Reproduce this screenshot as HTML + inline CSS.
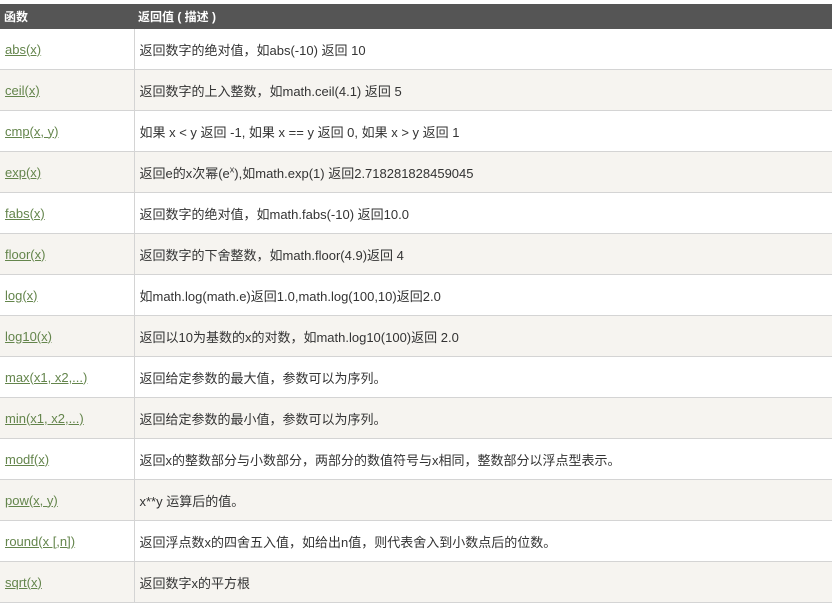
<!DOCTYPE html><html><head><meta charset="utf-8"><style>
body{margin:0;background:#fff;font-family:"Liberation Sans","Noto Sans CJK SC",sans-serif;font-size:13px;color:#333;overflow:hidden}
table{position:absolute;top:4px;left:0;width:832px;border-collapse:collapse;table-layout:fixed}
th{background:#555;color:#fff;text-align:left;font-weight:bold;height:25px;padding:0 0 0 4px;font-size:12px}
td{height:40px;padding:0 0 0 5px;border-bottom:1px solid #d4d4d4;vertical-align:middle}
td:first-child{border-right:1px solid #d4d4d4}
tr:nth-child(odd) td{background:#f6f4f0}
a{color:#64854c;text-decoration:underline}
</style></head><body><table>
<colgroup><col style="width:134px"><col></colgroup>
<tr><th>函数</th><th>返回值 ( 描述 )</th></tr>
<tr><td><a>abs(x)</a></td><td>返回数字的绝对值，如abs(-10) 返回 10</td></tr>
<tr><td><a>ceil(x)</a></td><td>返回数字的上入整数，如math.ceil(4.1) 返回 5</td></tr>
<tr><td><a>cmp(x, y)</a></td><td>如果 x &lt; y 返回 -1, 如果 x == y 返回 0, 如果 x &gt; y 返回 1</td></tr>
<tr><td><a>exp(x)</a></td><td>返回e的x次幂(e<sup style="font-size:9px">x</sup>),如math.exp(1) 返回2.718281828459045</td></tr>
<tr><td><a>fabs(x)</a></td><td>返回数字的绝对值，如math.fabs(-10) 返回10.0</td></tr>
<tr><td><a>floor(x)</a></td><td>返回数字的下舍整数，如math.floor(4.9)返回 4</td></tr>
<tr><td><a>log(x)</a></td><td>如math.log(math.e)返回1.0,math.log(100,10)返回2.0</td></tr>
<tr><td><a>log10(x)</a></td><td>返回以10为基数的x的对数，如math.log10(100)返回 2.0</td></tr>
<tr><td><a>max(x1, x2,...)</a></td><td>返回给定参数的最大值，参数可以为序列。</td></tr>
<tr><td><a>min(x1, x2,...)</a></td><td>返回给定参数的最小值，参数可以为序列。</td></tr>
<tr><td><a>modf(x)</a></td><td>返回x的整数部分与小数部分，两部分的数值符号与x相同，整数部分以浮点型表示。</td></tr>
<tr><td><a>pow(x, y)</a></td><td>x**y 运算后的值。</td></tr>
<tr><td><a>round(x [,n])</a></td><td>返回浮点数x的四舍五入值，如给出n值，则代表舍入到小数点后的位数。</td></tr>
<tr><td><a>sqrt(x)</a></td><td>返回数字x的平方根</td></tr>
</table></body></html>
